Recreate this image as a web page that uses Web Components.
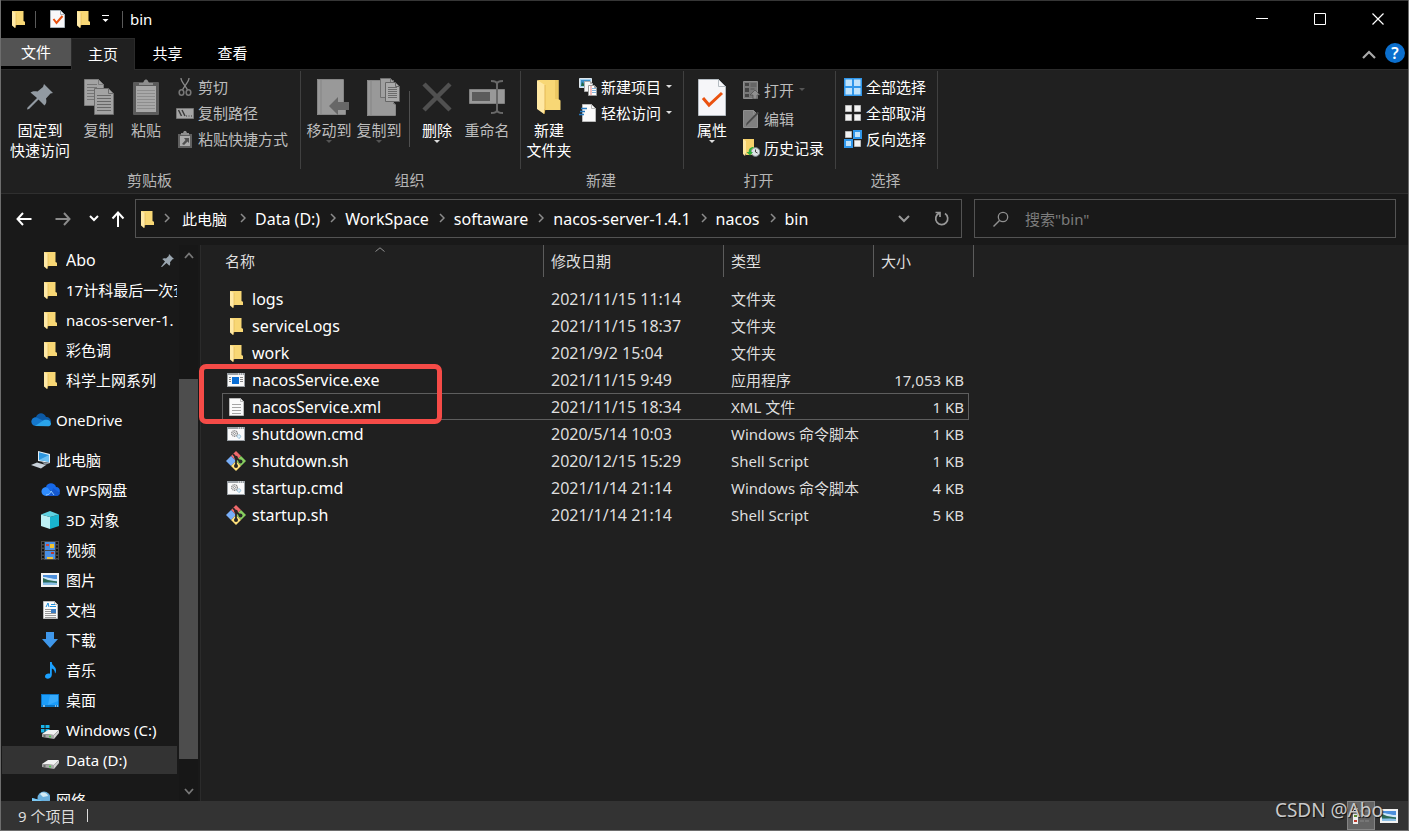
<!DOCTYPE html>
<html lang="zh-CN">
<head>
<meta charset="utf-8">
<title>bin</title>
<style>
  html, body { height: 100%; margin: 0; }
  body {
    background: #191919; color: #fff; overflow: hidden;
    font: 15px/20px "Noto Sans", "Noto Sans CJK SC", sans-serif;
  }
</style>
</head>
<body>
<explorer-window></explorer-window>

<script>
/* Icon registry: name -> [width, height, svg body] */
const page = (x, y, w, h, f, fill, stroke) =>
  `<path d="M${x} ${y}h${w - f}l${f} ${f}v${h - f}h-${w}z" fill="${fill}" stroke="${stroke}"/><path d="M${x + w - f} ${y}v${f}h${f}" fill="none" stroke="${stroke}"/>`;
const rules = (x, y, w, n, gap, c) =>
  Array.from({ length: n }, (_, i) => `<path d="M${x} ${y + i * gap}h${w}" stroke="${c}"/>`).join('');
const drive = `<path d="M1 13l6-4h11l-5 5z" fill="#f2f2f2"/><path d="M1 13l12 1v4L1 16z" fill="#a8a8a8"/><path d="M13 14l5-5v3l-5 6z" fill="#cfcfcf"/><path d="M2.500 14.500h2v1h-2z" fill="#333"/><circle cx="9" cy="15.500" r="1" fill="#3fd43f"/>`;
const cmd = `<path d="M0 0h18v14H0z" fill="#9aa0a5"/><path d="M1 2h16v11H1z" fill="#fafafa"/><path d="M11 1h1M13 1h1M15 1h1" stroke="#fff"/>
  <g fill="none" stroke="#8c8c8c"><circle cx="7.500" cy="6.500" r="2.800" stroke-width="1.400" stroke-dasharray="1.200 .6"/><circle cx="7.500" cy="6.500" r="1"/></g><circle cx="12" cy="9.500" r="1.700" fill="#dff1fb" stroke="#7fb2cf" stroke-dasharray="1 .4"/>`;
const photo = `<path d="M0 0h18v14H0z" fill="#f2f2f2"/><path d="M2 2h14v10H2z" fill="#6db4ee"/><path d="M2 2h14v4H2z" fill="#4d8fdb"/><path d="M2 4c5 0 8 2 14 2v2H2z" fill="#cfe8fa"/><path d="M2 5l5 2 9 1.500V10L2 9.500z" fill="#2c6a55"/><path d="M2 10l8-.5 6 .5v2H2z" fill="#8cc0e6"/>`;
const ICONS = {
  folder: [13, 18, `<path d="M0 1h11.500v10l1.500.8V15H3z" fill="#f8d775"/><path d="M0 1l4 2v11.500L3 18 0 15.500z" fill="#ffe9a6"/><path d="M4 3v11.500L3 18" fill="none" stroke="#e3b957" stroke-width=".7"/>`],
  bigfolder: [24, 36, `<path d="M1 1h20.500v19l2 1.500V31H8z" fill="#f8d775"/><path d="M18 1h3.500v19H18z" fill="#ecc863"/><path d="M0 1l8 5v24l-1 5-7-5z" fill="#ffe8a3"/><path d="M8 6v24l-1 5" fill="none" stroke="#e3b957"/>`],
  check: [16, 19, page(.5, .5, 14, 17, 4, '#f8f8fa', '#a9b3ba') + `<path d="M3.500 9l3 4 6-7" fill="none" stroke="#e8500f" stroke-width="2"/>`],
  bigcheck: [28, 37, page(.5, .5, 27, 36, 7, '#f6f6f9', '#b5bcc2') + `<path d="M5 19l6 7L24 14" fill="none" stroke="#ea5210" stroke-width="3"/>`],
  qat: [9, 8, `<path d="M1 .5h7" stroke="#fff"/><path d="M1.500 4h6l-3 3z" fill="#fff"/>`],
  min: [12, 12, `<path d="M0 5.500h12" stroke="#fff"/>`],
  max: [12, 12, `<path d="M.5.500h11v11H.5z" fill="none" stroke="#fff"/>`],
  close: [12, 12, `<path d="M.5.500l11 11M11.500.500l-11 11" stroke="#fff" stroke-width="1.200"/>`],
  fold: [14, 9, `<path d="M1 8l6-6 6 6" fill="none" stroke="#a9a9a9" stroke-width="2.200"/>`],
  down: [8, 4, `<path d="M1 0h6L4 3z" fill="currentColor"/>`],
  pin: [28, 28, `<path d="M18 1l9 9-2.500.5-4.500 5c.8 3 .4 5-1.500 7l-6-6L3 26l-2 .5.5-2L11 15 4.500 9.500C7 7.800 9 8 11.500 8.500L17 4z" fill="#929aa2"/>`],
  smallpin: [13, 13, `<path d="M8 0l5 5-1.500.3-2.500 3c.4 1.400.2 2.500-.6 3.400L5.500 9 1 13 0 12.800l4-5.300-2.700-2.600c1.200-.8 2.300-.7 3.700-.3L7.700 2z" fill="#9aa6b0"/>`],
  copy: [30, 36, page(.5, .5, 19, 26, 5, '#a3a3a3', '#7d7d7d') + rules(3, 5.500, 10, 6, 3, '#767676') + page(10.500, 9.500, 19, 26, 5, '#a3a3a3', '#6d6d6d') + rules(13, 16.500, 14, 6, 3, '#686868')],
  paste: [26, 36, `<rect y="3" width="26" height="33" rx="1" fill="#5b5b5b"/><path d="M3 7h20v26H3z" fill="#a8a8a8"/>` + rules(4, 11.500, 18, 7, 3, '#8d8d8d') + `<path d="M6 6V4h4l1-2c1-2 3-2 4 0l1 2h4v2z" fill="#8e8e8e"/>`],
  cut: [14, 18, `<path d="M3 0c0 4 5 8 6.500 12M11 0c0 4-5 8-6.500 12" fill="none" stroke="#8a8a8a" stroke-width="1.300"/><g fill="none" stroke="#777" stroke-width="1.600"><ellipse cx="3.500" cy="14.500" rx="2.300" ry="2.700"/><ellipse cx="10.500" cy="14.500" rx="2.300" ry="2.700"/></g>`],
  path: [18, 11, `<path d="M.5.500h17v10H.5z" fill="#a6a6a6" stroke="#777"/><path d="M2.500 2l3 6M6 2l3 6" stroke="#3d3d3d" stroke-width="1.500"/><path d="M10 8h1M12.500 8h1M15 8h1" stroke="#3d3d3d"/>`],
  shortcut: [14, 17, `<path d="M0 3h14v14H0z" fill="#606060"/><path d="M2 5h10v10H2z" fill="#ababab"/><path d="M3 4V2h2l1-2h2l1 2h2v2z" fill="#8f8f8f"/><path d="M6 7h5v5l-1.500-1.500L6 14l-2-1 3.500-4z" fill="#505050"/>`],
  move: [40, 36, `<g transform="translate(8)"><path d="M0 0h26v23l2 1.500V36H0z" fill="#999"/><path d="M.5.500h26V23l2 1.500V35.500H.5zM4 1v34" fill="none" stroke="#858585"/><path d="M12 27l9-9v5h11v8H21v5z" fill="#676767"/></g>`],
  copyto: [41, 38, `<g transform="translate(8)"><path d="M0 2h26v23l2 1.500V38H0z" fill="#999"/><path d="M.5 2.500h26V25l2 1.500V37.500H.5zM4 3v34" fill="none" stroke="#858585"/>` + page(13.500, .5, 14, 19, 4, '#a0a0a0', '#707070') + page(18.500, 4.500, 14, 19, 4, '#aaa', '#666') + rules(21, 9.500, 9, 6, 2, '#6b6b6b') + '</g>'],
  del: [30, 30, `<path d="M2 2l26 26M28 2L2 28" stroke="#505050" stroke-width="4.500"/>`],
  rename: [36, 34, `<path d="M.5 9.500h35v14H.5z" fill="#999" stroke="#808080"/><path d="M3 12h18v9H3z" fill="#5c5c5c"/><path d="M28 4v26M22 1c3 0 6 1 6 3 0-2 3-3 6-3M22 33c3 0 6-1 6-3 0 2 3 3 6 3" fill="none" stroke="#686868" stroke-width="2"/>`],
  newitem: [18, 18, `<path d="M.5.500h12v9H.5z" fill="#9fd0f3" stroke="#dfe7ec"/><path d="M2 2h9v6H2z" fill="#3b8ec6"/><path d="M3 4l4 4H2z" fill="#206a4b"/>` + page(5.500, 3.500, 8, 10, 2, '#f5f5f5', '#aaa') + page(9.500, 7.500, 8, 10, 2, '#fff', '#9a9a9a') + `<path d="M12 8v9" stroke="#e98383"/>` + rules(13, 10.500, 4, 3, 2, '#86b7df')],
  easy: [18, 18, page(3.500, .5, 13, 17, 4, '#fafafa', '#b9b9b9') + `<path d="M2 4.500h6M1 7.500h5M0 10.500h5" stroke="#2477bd" stroke-width="1.500"/>`],
  open: [17, 18, `<path d="M.5.500h14v17H.5z" fill="#787878" stroke="#8b8b8b"/><path d="M2 2h4v3H2zM2 7h4v4H2zM2 13h4v3H2z" fill="#444"/><path d="M7.500 3h6M7.500 5h6M7.500 8h4" stroke="#555"/><path d="M12 9l5 5h-3v4h-4v-4H7z" fill="#8f8f8f" stroke="#444" stroke-width=".6"/>`],
  edit: [17, 18, page(.5, .5, 14, 17, 4, '#808080', '#8f8f8f') + `<path d="M16 3L5 14l-2 2 .6-3L14.500 1.800z" fill="#484848"/>`],
  history: [17, 18, `<path d="M0 0h11v10l1 6H3z" fill="#f6d16a"/><path d="M0 0l3 2v12l-1 3-2-2z" fill="#ffe7a0"/><circle cx="12.500" cy="13" r="4.300" fill="#dce3e6" stroke="#8d979c"/><path d="M12.500 10.500V13l2 1" fill="none" stroke="#444"/><path d="M10.500 8C7 8 5.500 10.500 5.800 13H3.500L7 16.500 10 13H8c0-2 .8-3.500 2.500-4z" fill="#2fae3d"/>`],
  selall: [18, 18, `<path d="M0 0h18v18H0z" fill="#2f96ea"/><path d="M1.500 1.500h6.500v6.500h-6.500zM10 1.500h6.500v6.500H10zM1.500 10h6.500v6.500h-6.500zM10 10h6.500v6.500H10z" fill="#bfe2fb"/>`],
  selnone: [18, 18, `<path d="M1.500 1.500h6v6h-6zM10.500 1.500h6v6h-6zM1.500 10.500h6v6h-6zM10.500 10.500h6v6h-6z" fill="#f2f2f2" stroke="#b8b8b8"/>`],
  selinv: [18, 18, `<path d="M1.500 1.500h6v6h-6zM10.500 10.500h6v6h-6z" fill="#f2f2f2" stroke="#b8b8b8"/><path d="M10 1h7v7h-7zM1 10h7v7H1z" fill="#bfe2fb" stroke="#2f96ea" stroke-width="2"/>`],
  back: [16, 14, `<path d="M15.500 7H1.500M7 1L1.500 7 7 13" fill="none" stroke="#fff" stroke-width="2"/>`],
  fwd: [16, 14, `<path d="M.5 7h14M9 1l5.500 6L9 13" fill="none" stroke="#8b8b8b" stroke-width="2"/>`],
  chev: [10, 7, `<path d="M1 1l4 4 4-4" fill="none" stroke="#fff" stroke-width="2"/>`],
  up: [14, 16, `<path d="M7 16V2M1.500 7.500L7 1.500l5.500 6" fill="none" stroke="#fff" stroke-width="2"/>`],
  crumb: [6, 10, `<path d="M1 1l4 4-4 4" fill="none" stroke="#8c8c8c" stroke-width="1.500"/>`],
  chevgray: [12, 8, `<path d="M1 1l5 5 5-5" fill="none" stroke="#999" stroke-width="2"/>`],
  refresh: [16, 16, `<path d="M11 2.500A6 6 0 1 1 5 2.200M1.500 1.500h4.500v4.500" fill="none" stroke="#999" stroke-width="1.700"/>`],
  search: [17, 16, `<circle cx="11" cy="6" r="4.700" fill="none" stroke="#909090" stroke-width="1.300"/><path d="M7.500 9.500l-6 6" stroke="#909090" stroke-width="1.400"/>`],
  scrollup: [10, 7, `<path d="M1 6l4-4.500L9 6" fill="none" stroke="#777" stroke-width="1.800"/>`],
  scrolldown: [10, 7, `<path d="M1 1l4 4.500L9 1" fill="none" stroke="#777" stroke-width="1.800"/>`],
  sort: [10, 5, `<path d="M.5 4.500L5 .8l4.500 3.700" fill="none" stroke="#909090"/>`],
  onedrive: [20, 14, `<path d="M5 4C7-1 13-1 15 4c3 0 5 2 5 5L5 12C0 12-1 5 5 4z" fill="#0c59a4"/><path d="M1 11C-1 7 2 4 5.500 4.500L13 8l-8 5c-2 0-3-.7-4-2z" fill="#1577cc"/><path d="M4 13l9-6c3-1 7 0 7 4 0 1-1 2-2.500 2.300z" fill="#2aa4ea"/>`],
  pc: [20, 18, `<path d="M7 0l12 3v9L7 10z" fill="#e4eef5"/><path d="M8 1.300l10 2.600v6.800L8 9z" fill="#2e97df"/><path d="M8 9l10-5v6.700z" fill="#6cc0f3"/><path d="M0 14l6-2.500L15 14l-5 3.500z" fill="#c7d0d8"/><path d="M11 11l8 1-5 2z" fill="#8f99a2"/>`],
  wps: [19, 14, `<path d="M5 4c1-5 9-5 10 0 5 0 5 7 1 9L5 4z" fill="#1668e8"/><path d="M5 4C-1 4-1 13 5 13h9L7 5z" fill="#2f8cff"/><path d="M5 13c2-1 6-4 7-8l7 5c0 2-2 3-4 3z" fill="#1558cf"/><path d="M5 12c3 0 5-2 5-4l3 4" fill="none" stroke="#8fc8ff"/>`],
  cube: [18, 18, `<path d="M0 3.500L9 6v12l-9-3z" fill="#bdf0f5"/><path d="M18 3.500L9 6v12l9-3z" fill="#19b4cf"/><path d="M0 3.500L9 0l9 3.500L9 6z" fill="#5fd2e2"/>`],
  video: [18, 19, `<path d="M0 0h18v19H0z" fill="#484848"/><path d="M4 1h10v8H4zM4 10h10v8H4z" fill="#4a8fe4"/><path d="M2 1v18M16 1v18" stroke="#111" stroke-width="2" stroke-dasharray="2 1.500"/><path d="M5 3h3v2H5z" fill="#d84635"/><path d="M9 3h4v4H9z" fill="#f0c330"/><path d="M10 11h3v2h-3z" fill="#b83a32"/><path d="M6 16h6v2H6z" fill="#efc03a"/>`],
  photo: [18, 14, photo],
  doc: [15, 18, page(.5, .5, 14, 17, 3, '#fafafa', '#bbb') + rules(2, 8.500, 11, 5, 2, '#999') + `<path d="M3 6l2-4 1 4M8 3.500h4M7 5.500h6" stroke="#2090dd" fill="none"/><path d="M8 8h5v4H8z" fill="#3b7cc1"/>`],
  download: [16, 16, `<path d="M4 0h8v7h4l-8 9-8-9h4z" fill="#3f97ea"/>`],
  music: [11, 17, `<path d="M5 0h1.800c0 4 4.200 4 4.200 8.500 0 1.500-.5 2.500-1 3 0-3-1.500-4.500-3.200-5V13c0 4-6.800 5-6.800 1.500C0 12 3 11 5 11.700z" fill="#1ba1ff"/>`],
  desktop: [18, 13, `<path d="M0 0h18v13H0z" fill="#0a74c4"/><path d="M1 1h16v10H1z" fill="#1c9dfa"/><path d="M9 1h8v6L7 11z" fill="#37aafc"/><path d="M2 12h2M14 12h1M16 12h1" stroke="#fff"/>`],
  drivec: [19, 19, `<path d="M0 4h3.500v3H0zM4.500 4h4v3h-4zM0 8h3.500v3.500H0zM4.500 8h4v3.500h-4z" fill="#19b5ea"/>` + drive],
  drived: [19, 19, drive],
  network: [18, 19, `<circle cx="12" cy="7" r="6.500" fill="#6db1dd"/><path d="M8 3c3-3 7-1 8 2l-5 1z" fill="#d3ebf6"/><path d="M0 7l12 3v9L0 16z" fill="#1c8ad6"/><path d="M0 7l12 3-12 5z" fill="#7ecaf4"/>`],
  exe: [18, 14, `<path d="M0 0h18v14H0z" fill="#9aa0a5"/><path d="M1 2h16v11H1z" fill="#fafafa"/><path d="M11 1h1M13 1h1M15 1h1" stroke="#fff"/><path d="M5 4h7v7H5z" fill="#0a6fd6"/><path d="M2 4.500h2M2 6.500h2M2 8.500h2M13 4.500h3M13 6.500h3M13 8.500h3" stroke="#888"/>`],
  xml: [15, 18, page(.5, .5, 14, 17, 3, '#fafafa', '#bbb') + rules(3, 6.500, 9, 4, 3, '#a5a5a5')],
  cmd: [18, 14, cmd],
  git: [20, 20, `<path d="M10 0l5 5-5 5-5-5z" fill="#f0696b"/><path d="M5 5l5 5-5 5-5-5z" fill="#78aef8"/><path d="M15 5l5 5-5 5-5-5z" fill="#86cf5f"/><path d="M10 10l5 5-5 5-5-5z" fill="#ffe07a"/><path d="M7 3l3 3.500v9M10 7l4.500 3.500" stroke="#262626" stroke-width="1.800" fill="none"/><circle cx="10" cy="6.500" r="1.800" fill="#262626"/><circle cx="14.500" cy="10.500" r="2" fill="#262626"/><circle cx="10" cy="15" r="2" fill="#262626"/>`],
  details: [20, 20, `<path d="M2 2h5v16H2z" fill="#eee"/><path d="M3 4h3v2H3z" fill="#222"/><path d="M3 9h3v2H3z" fill="#5a8a2e"/><path d="M3 14h3v2H3z" fill="#c0392b"/><path d="M9 5h4M14 5h4M9 10h4M14 10h4M9 15h4M14 15h4" stroke="#888"/>`],
};

const define = (name, render) => customElements.define(name, class extends HTMLElement {
  connectedCallback() {
    if (this.shadowRoot) return;
    this.attachShadow({ mode: 'open' }).innerHTML = render(this);
  }
});
const reset = `button{font:inherit;color:inherit;background:none;border:0;padding:0;margin:0}a{color:inherit;text-decoration:none}`;
const icon = n => `<x-icon name="${n}"></x-icon>`;

define('x-icon', el => {
  const [w, h, body] = ICONS[el.getAttribute('name')];
  return `<style>:host{display:inline-flex;flex:none}svg{display:block}</style>
    <svg width="${w}" height="${h}" viewBox="0 0 ${w} ${h}" aria-hidden="true">${body}</svg>`;
});

define('title-bar', () => `<style>${reset}
  :host{display:flex;align-items:center;height:38px;background:#000;padding-right:1px}
  .slot{display:flex;justify-content:center;width:16px}
  .bar{width:1px;height:17px;background:#5a5a5a}
  h1{font-size:15px;font-weight:400;margin:0 0 0 7px;flex:1}
  .lead{width:34px}
  .check{width:34px;margin-left:5px}
  .menu{width:20px;margin-left:4px}.end{margin-left:7px}
  .cap{width:58px;height:38px;display:flex;align-items:center;justify-content:center}
  </style>
  <span class="slot lead">${icon('folder')}</span><span class="bar"></span>
  <button class="slot check" aria-label="属性">${icon('check')}</button>
  <button class="slot" aria-label="新建文件夹">${icon('folder')}</button>
  <button class="slot menu" aria-label="自定义">${icon('qat')}</button>
  <span class="bar end"></span><h1>bin</h1>
  <button class="cap" aria-label="最小化">${icon('min')}</button>
  <button class="cap" aria-label="最大化">${icon('max')}</button>
  <button class="cap" aria-label="关闭">${icon('close')}</button>`);

define('ribbon-tabs', () => `<style>${reset}
  :host{display:flex;height:31px;background:#000;border-bottom:1px solid #2b2b2b}
  button{width:65px;height:30px}
  .file{width:70px;height:28px;background:#535353}
  .on{width:64px;height:32px;background:#202020;border:1px solid #2b2b2b;border-bottom:0;padding-bottom:2px}
  .gap{flex:1}
  .fold{width:28px}
  .help{width:20px;height:20px;border-radius:10px;background:#0b6fce;font-size:16px;font-weight:600;margin:5px 3px 0 2px}
  </style>
  <button class="file">文件</button><button class="on">主页</button><button>共享</button><button>查看</button>
  <span class="gap"></span><button class="fold" aria-label="折叠功能区">${icon('fold')}</button><button class="help">?</button>`);

define('ribbon-group', el => `<style>
  :host{display:flex;flex-direction:column;position:relative;box-sizing:border-box;height:123px}
  :host::after{content:"";width:1px;height:98px;background:#404040;position:absolute;right:0;top:1px}
  .body{display:flex;flex:1;padding-left:3px}
  .label{text-align:center;color:#b5b5b5;padding:0 3px 3px 0}
  </style><div class="body"><slot></slot></div><div class="label">${el.getAttribute('label')}</div>`);

define('ribbon-big', el => `<style>${reset}
  :host{display:block}:host([off]){color:#bdbdbd}
  button{width:100%;display:flex;flex-direction:column;align-items:center;padding-top:7px;white-space:nowrap}
  .ic{height:40px;display:flex;align-items:center;margin-bottom:3px}
  .dd{display:flex;color:#ddd}:host([off]) .dd{color:#555}
  </style><button><span class="ic">${icon(el.getAttribute('icon'))}</span><slot></slot>${el.hasAttribute('menu') ? `<span class="dd">${icon('down')}</span>` : ''}</button>`);

define('ribbon-small', el => `<style>${reset}
  :host{display:block}:host([off]){color:#bdbdbd}
  button{display:flex;align-items:center;gap:4px;height:var(--row,26px);white-space:nowrap}
  .ic{width:18px;display:flex;justify-content:center}
  .dd{display:flex;color:#ddd}:host([off]) .dd{color:#555}
  </style><button><span class="ic">${icon(el.getAttribute('icon'))}</span><slot></slot>${el.hasAttribute('menu') ? `<span class="dd">${icon('down')}</span>` : ''}</button>`);

define('home-ribbon', () => `<style>
  :host{display:flex;background:#202020;border-bottom:1px solid #2f2f2f;color:#fff}
  .list{padding:4px 0 0 5px}.wide{--row:29px;padding-top:5px}
  .sep{width:1px;height:56px;margin:21px 5px 0;background:#4f4f4f}
  .clip{width:300px}.org{width:220px}.new{width:163px}.open{width:152px}.sel{width:102px}
  .w72{width:72px}.w56{width:56px}.w50{width:50px}.w45{width:45px}.w44{width:44px}
  </style>
  <ribbon-group class="clip" label="剪贴板">
    <ribbon-big class="w72" icon="pin">固定到<br>快速访问</ribbon-big>
    <ribbon-big class="w45" icon="copy" off>复制</ribbon-big>
    <ribbon-big class="w50" icon="paste" off>粘贴</ribbon-big>
    <div class="list"><ribbon-small icon="cut" off>剪切</ribbon-small><ribbon-small icon="path" off>复制路径</ribbon-small><ribbon-small icon="shortcut" off>粘贴快捷方式</ribbon-small></div>
  </ribbon-group>
  <ribbon-group class="org" label="组织">
    <ribbon-big class="w50" icon="move" off menu>移动到</ribbon-big>
    <ribbon-big class="w50" icon="copyto" off menu>复制到</ribbon-big>
    <span class="sep"></span>
    <ribbon-big class="w44" icon="del" menu>删除</ribbon-big>
    <ribbon-big class="w56" icon="rename" off>重命名</ribbon-big>
  </ribbon-group>
  <ribbon-group class="new" label="新建">
    <ribbon-big class="w50" icon="bigfolder">新建<br>文件夹</ribbon-big>
    <div class="list"><ribbon-small icon="newitem" menu>新建项目</ribbon-small><ribbon-small icon="easy" menu>轻松访问</ribbon-small></div>
  </ribbon-group>
  <ribbon-group class="open" label="打开">
    <ribbon-big class="w50" icon="bigcheck" menu>属性</ribbon-big>
    <div class="list wide"><ribbon-small icon="open" off menu>打开</ribbon-small><ribbon-small icon="edit" off>编辑</ribbon-small><ribbon-small icon="history">历史记录</ribbon-small></div>
  </ribbon-group>
  <ribbon-group class="sel" label="选择">
    <div class="list"><ribbon-small icon="selall">全部选择</ribbon-small><ribbon-small icon="selnone">全部取消</ribbon-small><ribbon-small icon="selinv">反向选择</ribbon-small></div>
  </ribbon-group>`);

define('address-bar', () => `<style>${reset}
  :host{display:flex;height:39px;padding:5px 12px 7px 8px;background:#191919}
  .nav{display:flex;align-items:center;width:126px}
  .nav button{display:flex;justify-content:center;align-items:center;height:39px}
  .b{width:30px}.f{width:48px}.c{width:14px}.u{width:34px}
  .path,.find{box-sizing:border-box;border:1px solid #535353;display:flex;align-items:center}
  .path{flex:1;padding-left:5px}
  .trail{display:flex;align-items:center;flex:1;font-size:16px}
  .trail x-icon[name=crumb]{margin:0 9px 1px 10px}
  .trail .zh{font-size:15px;padding:0 3px}
  .end{width:38px;height:37px;display:flex;align-items:center;justify-content:center}
  .find{flex:0 0 422px;margin-left:12px;padding-left:17px;gap:16px}
  input{flex:1;min-width:0;background:none;border:0;padding:0;outline:0;color:#fff;font:inherit}
  input::placeholder{color:#7c7c7c;opacity:1}
  </style>
  <div class="nav"><button class="b" aria-label="后退">${icon('back')}</button><button class="f" aria-label="前进">${icon('fwd')}</button><button class="c" aria-label="最近">${icon('chev')}</button><button class="u" aria-label="向上">${icon('up')}</button></div>
  <div class="path"><nav class="trail">${icon('folder')}${['此电脑', 'Data (D:)', 'WorkSpace', 'softaware', 'nacos-server-1.4.1', 'nacos', 'bin'].map((t, i) => `${icon('crumb')}<a href="#"${i ? '' : ' class="zh"'}>${t}</a>`).join('')}</nav>
    <button class="end" aria-label="历史">${icon('chevgray')}</button><button class="end" aria-label="刷新">${icon('refresh')}</button></div>
  <div class="find">${icon('search')}<input type="text" aria-label="搜索" placeholder='搜索"bin"'></div>`);

define('nav-item', el => `<style>${reset}
  :host{display:flex;align-items:center;height:30px}
  a{flex:1;min-width:0;display:flex;align-items:center;height:28px;margin:0 2px 0 1px;padding-left:37px;white-space:nowrap;overflow:hidden}
  :host([root]) a{padding-left:28px}
  :host([gap]){margin-top:10px}
  :host([current]) a{background:#333}
  :host([latin]) .t{font-size:16px}
  .ic{width:22px;flex:none;display:flex;justify-content:center;margin-right:5px}
  :host([root]) .ic{margin-right:4px}
  .t{flex:1;overflow:hidden}
  .pin{margin-right:3px;display:flex}
  </style><a href="#"><span class="ic">${icon(el.getAttribute('icon'))}</span><span class="t"><slot></slot></span>${el.hasAttribute('pinned') ? `<span class="pin">${icon('smallpin')}</span>` : ''}</a>`);

define('nav-pane', () => `<style>${reset}
  :host{display:flex;width:199px;flex:none;border-right:1px solid #2b2b2b;background:#191919;overflow:hidden}
  nav{flex:1;min-width:0;overflow:hidden}
  .scroll{width:19px;margin-right:2px;display:flex;flex-direction:column;background:#171717}
  .scroll button{height:20px;flex:none;display:flex;justify-content:center;align-items:center}
  .track{flex:1;display:flex;flex-direction:column}
  .track i:nth-child(1){flex:114}.track i:nth-child(2){flex:380;background:#4d4d4d}.track i:nth-child(3){flex:22}
  </style><nav>
  <nav-item icon="folder" latin pinned>Abo</nav-item>
  <nav-item icon="folder">17计科最后一次查</nav-item>
  <nav-item icon="folder">nacos-server-1.</nav-item>
  <nav-item icon="folder">彩色调</nav-item>
  <nav-item icon="folder">科学上网系列</nav-item>
  <nav-item icon="onedrive" root gap>OneDrive</nav-item>
  <nav-item icon="pc" root gap>此电脑</nav-item>
  <nav-item icon="wps">WPS网盘</nav-item>
  <nav-item icon="cube">3D 对象</nav-item>
  <nav-item icon="video">视频</nav-item>
  <nav-item icon="photo">图片</nav-item>
  <nav-item icon="doc">文档</nav-item>
  <nav-item icon="download">下载</nav-item>
  <nav-item icon="music">音乐</nav-item>
  <nav-item icon="desktop">桌面</nav-item>
  <nav-item icon="drivec">Windows (C:)</nav-item>
  <nav-item icon="drived" current>Data (D:)</nav-item>
  <nav-item icon="network" root gap>网络</nav-item>
  </nav><div class="scroll"><button aria-label="向上滚动">${icon('scrollup')}</button><div class="track"><i></i><i></i><i></i></div><button aria-label="向下滚动">${icon('scrolldown')}</button></div>`);

const FILES = [
  ['folder', 'logs', '2021/11/15 11:14', '文件夹', ''],
  ['folder', 'serviceLogs', '2021/11/15 18:37', '文件夹', ''],
  ['folder', 'work', '2021/9/2 15:04', '文件夹', ''],
  ['exe', 'nacosService.exe', '2021/11/15 9:49', '应用程序', '17,053 KB'],
  ['xml', 'nacosService.xml', '2021/11/15 18:34', 'XML 文件', '1 KB'],
  ['cmd', 'shutdown.cmd', '2020/5/14 10:03', 'Windows 命令脚本', '1 KB'],
  ['git', 'shutdown.sh', '2020/12/15 15:29', 'Shell Script', '1 KB'],
  ['cmd', 'startup.cmd', '2021/1/14 21:14', 'Windows 命令脚本', '4 KB'],
  ['git', 'startup.sh', '2021/1/14 21:14', 'Shell Script', '5 KB'],
];
define('file-table', () => `<style>${reset}
  :host{display:block;flex:1;min-width:0;position:relative;background:#202020;padding-left:21px}
  table{border-collapse:separate;border-spacing:0;table-layout:fixed;width:752px}
  col.n{width:321px}col.d{width:180px}col.t{width:150px}col.s{width:101px}
  th{height:32px;padding:0 0 0 7px;text-align:left;font-weight:400;color:#dedede;border-left:1px solid #5c5c5c;position:relative;box-sizing:border-box}
  th:first-child{border-left:0;padding-left:3px}
  th:last-child{border-right:1px solid #5c5c5c}
  .sort{position:absolute;left:153px;top:1px;line-height:0}
  tbody::before{content:"";display:block;height:8px}
  tr{position:relative}
  td{height:27px;padding:0 0 0 8px;color:#dedede;white-space:nowrap}
  td:first-child{padding-left:4px;color:#fff}
  td:nth-child(2),td:first-child{font-size:16px}
  td:last-child{text-align:right;padding-right:10px}
  .f{display:flex;align-items:center;gap:6px}
  .ic{width:20px;display:flex;justify-content:center}
  .focus td:first-child::after{content:"";position:absolute;inset:0 5px 0 0;border:1px solid #5e5e5e}
  .mark{position:absolute;left:-2px;top:119px;width:233px;height:50px;border:5px solid #f54b47;border-radius:7px}
  </style>
  <table><colgroup><col class="n"><col class="d"><col class="t"><col class="s"></colgroup>
  <thead><tr><th>名称<span class="sort">${icon('sort')}</span></th><th>修改日期</th><th>类型</th><th>大小</th></tr></thead>
  <tbody>${FILES.map(([i, n, d, t, s]) => `<tr${i === 'xml' ? ' class="focus"' : ''}><td><span class="f"><span class="ic">${icon(i)}</span>${n}</span></td><td>${d}</td><td>${t}</td><td>${s}</td></tr>`).join('')}</tbody></table>
  <div class="mark" aria-hidden="true"></div>`);

define('status-bar', () => `<style>${reset}
  :host{display:flex;align-items:center;height:29px;background:#333;padding:0 5px 0 17px;position:relative;color:#ddd}
  .bar{width:1px;height:13px;background:#ddd;margin-left:12px}
  .gap{flex:1}
  button{display:flex;align-items:center;justify-content:center;height:29px;width:28px}
  .on{background:#646464;box-sizing:border-box;border:1px solid #858585}
  .mark{position:absolute;right:25px;top:-4px;font-size:19px;line-height:26px;color:#c9c9c9;text-shadow:1px 1px 1px #111}
  </style><span>9 个项目</span><span class="bar"></span><span class="gap"></span>
  <button class="on" aria-label="详细信息">${icon('details')}</button><button aria-label="大缩略图">${icon('photo')}</button>
  <span class="mark">CSDN @Abo</span>`);

define('explorer-window', () => `<style>
  :host{display:flex;flex-direction:column;height:100vh;box-sizing:border-box;border:1px solid #6d6d6d;border-top:0;overflow:hidden}
  title-bar{box-shadow:inset 0 1px #363636}
  main{flex:1;min-height:0;display:flex}
  </style><title-bar></title-bar><ribbon-tabs></ribbon-tabs><home-ribbon></home-ribbon><address-bar></address-bar>
  <main><nav-pane></nav-pane><file-table></file-table></main><status-bar></status-bar>`);
</script>
</body>
</html>
